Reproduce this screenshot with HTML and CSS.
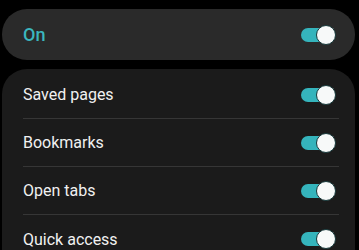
FILE: index.html
```html
<!DOCTYPE html>
<html lang="en">
<head>
    <meta charset="UTF-8">
    <meta name="viewport" content="width=device-width, initial-scale=1.0">
    <title>Offline settings</title>
    <link rel="stylesheet" href="styles.css">
</head>
<body>
    <div class="master-card">
        <span class="master-label">On</span>
        <span class="switch"><span class="knob"></span></span>
    </div>

    <div class="list-card">
        <div class="list-row">
            <span class="row-label">Saved pages</span>
            <span class="switch"><span class="knob"></span></span>
        </div>
        <div class="list-row">
            <span class="row-label">Bookmarks</span>
            <span class="switch"><span class="knob"></span></span>
        </div>
        <div class="list-row">
            <span class="row-label">Open tabs</span>
            <span class="switch"><span class="knob"></span></span>
        </div>
        <div class="list-row">
            <span class="row-label">Quick access</span>
            <span class="switch"><span class="knob"></span></span>
        </div>
    </div>
</body>
</html>
```

FILE: styles.css
```css
* {
    margin: 0;
    padding: 0;
    box-sizing: border-box;
}

body {
    font-family: Roboto, 'Noto Sans', sans-serif;
    background: #000;
    padding: 9px 4px 0 2px;
    height: 250px;
    overflow: hidden;
}

.master-card {
    background: #2a2a2a;
    border-radius: 25px;
    height: 51px;
    display: flex;
    align-items: center;
    justify-content: space-between;
    padding: 0 19px 0 21px;
}

.master-label {
    color: #3bb7bf;
    font-size: 18px;
    font-weight: 500;
}

.list-card {
    background: #1b1b1b;
    border-radius: 25px 25px 0 0;
    margin-top: 9px;
    padding: 2px 16px 0 21px;
}

.list-row {
    height: 48px;
    display: flex;
    align-items: center;
    justify-content: space-between;
    padding-right: 3px;
    border-bottom: 1px solid #363636;
}

.list-row:last-child {
    border-bottom: none;
}

.row-label {
    color: #f1f1f1;
    font-size: 16px;
}

.switch {
    width: 35px;
    height: 20px;
    position: relative;
    display: block;
}

.switch::before {
    content: '';
    position: absolute;
    left: 0;
    top: 3px;
    width: 32px;
    height: 14px;
    border-radius: 7px;
    background: #35b4bc;
}

.knob {
    position: absolute;
    right: 0;
    top: 0;
    width: 20px;
    height: 20px;
    border-radius: 50%;
    background: #f7f9f9;
    border: 1.5px solid #17393b;
}
```
